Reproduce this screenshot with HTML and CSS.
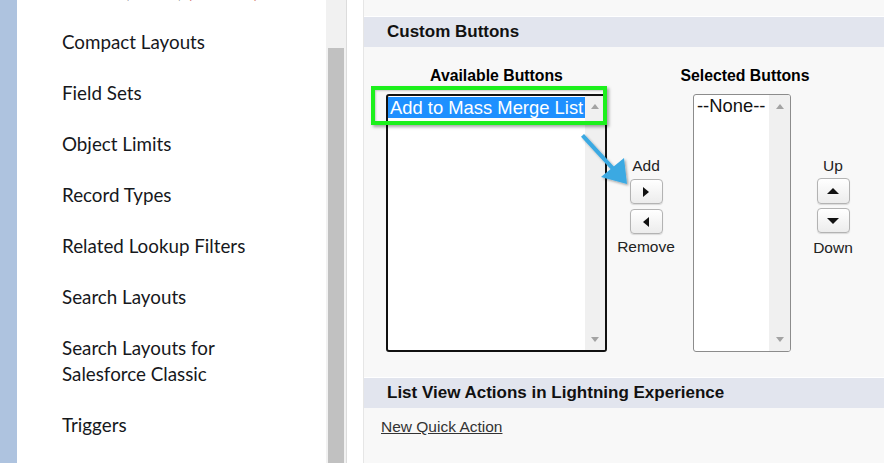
FILE: index.html
```html
<!DOCTYPE html>
<html>
<head>
<meta charset="utf-8">
<link rel="stylesheet" href="styles.css">
</head>
<body>
<div class="page">
  <div class="strip"></div>
  <nav class="sidebar">
    <ul class="menu">
      <li class="menu-item">Buttons, Links, <span class="red">(Actions)</span></li>
      <li class="menu-item">Compact Layouts</li>
      <li class="menu-item">Field Sets</li>
      <li class="menu-item">Object Limits</li>
      <li class="menu-item">Record Types</li>
      <li class="menu-item">Related Lookup Filters</li>
      <li class="menu-item">Search Layouts</li>
      <li class="menu-item">Search Layouts for<br>Salesforce Classic</li>
      <li class="menu-item">Triggers</li>
    </ul>
  </nav>
  <div class="scrollbar"><div class="thumb"></div></div>
  <div class="gutter"></div>
  <main class="main">
    <h2 class="section-head">Custom Buttons</h2>
    <div class="picker">
      <div class="pick-col col-available">
        <div class="pick-label">Available Buttons</div>
        <div class="listbox listbox-dark">
          <div class="options"><div class="option selected">Add to Mass Merge List</div></div>
          <div class="sb"><span class="tri-up"></span><span class="tri-down"></span></div>
        </div>
      </div>
      <div class="btn-col col-addrem">
        <div class="btn-label">Add</div>
        <button class="arrow-btn"><span class="ic-right"></span></button>
        <button class="arrow-btn"><span class="ic-left"></span></button>
        <div class="btn-label">Remove</div>
      </div>
      <div class="pick-col col-selected">
        <div class="pick-label label-selected">Selected Buttons</div>
        <div class="listbox listbox-light">
          <div class="options"><div class="option">--None--</div></div>
          <div class="sb"><span class="tri-up"></span><span class="tri-down"></span></div>
        </div>
      </div>
      <div class="btn-col col-updown">
        <div class="btn-label">Up</div>
        <button class="arrow-btn"><span class="ic-up"></span></button>
        <button class="arrow-btn"><span class="ic-down"></span></button>
        <div class="btn-label">Down</div>
      </div>
    </div>
    <h2 class="section-head section-head2">List View Actions in Lightning Experience</h2>
    <a class="quick-link" href="#">New Quick Action</a>
  </main>

  <div class="highlight"></div>
  <svg class="callout-arrow" width="60" height="64" viewBox="0 0 60 64">
    <defs>
      <filter id="sh" x="-30%" y="-30%" width="160%" height="160%">
        <feDropShadow dx="1.5" dy="1.5" stdDeviation="1.2" flood-color="#000" flood-opacity="0.35"/>
      </filter>
    </defs>
    <g filter="url(#sh)" fill="#3aa9e2">
      <path d="M6 3 L36.5 36.2 L33.5 39 L3 5.8 Z"/>
      <path d="M49 53 L23 46 L46 27 Z"/>
    </g>
  </svg>
</div>
</body>
</html>
```
FILE: styles.css
```css
* { box-sizing: border-box; }
html, body { margin: 0; padding: 0; }
body { width: 884px; height: 463px; overflow: hidden; background: #f8f8f8; }

.page {
  position: relative;
  display: flex;
  width: 884px;
  height: 463px;
  overflow: hidden;
}

.strip { width: 17px; flex: none; background: #aec3df; }

.sidebar {
  width: 309px;
  flex: none;
  background: #ffffff;
  overflow: hidden;
}
.menu {
  list-style: none;
  margin: -22px 0 0 0;
  padding: 0 0 0 45px;
  display: flex;
  flex-direction: column;
  gap: 25px;
}
.menu-item {
  font-family: Lato, "Noto Sans", sans-serif;
  font-size: 18.8px;
  line-height: 26px;
  color: #16181c;
  white-space: nowrap;
}
.red { color: #c23934; }

.scrollbar {
  width: 21px;
  flex: none;
  background: #f1f1f1;
  padding: 48px 2px 0 2px;
  border-right: 1px solid #dcdcdc;
}
.thumb { height: 100%; background: #c1c1c1; }

.gutter {
  width: 17px;
  flex: none;
  background: #ffffff;
  border-right: 1px solid #e6e6e6;
}

.main {
  flex: 1;
  background: #f8f8f8;
  padding-top: 16px;
  font-family: "Liberation Sans", Arial, sans-serif;
  color: #000;
}

.section-head {
  margin: 0;
  height: 31px;
  padding-left: 23px;
  background: #e2e5ee;
  border-top: 1px solid #ffffff;
  font-size: 17px;
  font-weight: bold;
  line-height: 30px;
  color: #111;
}
.section-head2 { margin-top: 25px; }

.picker {
  display: flex;
  align-items: flex-start;
  padding-left: 22px;
}

.pick-col { display: flex; flex-direction: column; align-items: center; }
.col-available { width: 221px; }
.col-selected { width: 98px; margin-left: 1px; }
.pick-label {
  margin-top: 21px;
  font-size: 15.8px;
  font-weight: bold;
  line-height: 16px;
  height: 16px;
  white-space: nowrap;
}
.label-selected { margin-left: 6px; }

.listbox {
  margin-top: 10px;
  height: 258px;
  display: flex;
  background: #fff;
  border-radius: 3px;
  overflow: hidden;
}
.listbox-dark { width: 221px; border: 2px solid #111; }
.listbox-light { width: 98px; border: 1px solid #8c8c8c; }

.options { flex: 1; padding-top: 1px; }
.option {
  font-size: 18.4px;
  line-height: 21px;
  height: 21px;
  padding-left: 2px;
  white-space: nowrap;
  color: #111;
}
.listbox-light .options { padding-top: 0; }
.listbox-light .option { padding-left: 3px; }
.option.selected { background: #1e90ff; color: #fff; }

.sb {
  width: 20px;
  flex: none;
  background: #f0f0f0;
  display: flex;
  flex-direction: column;
  justify-content: space-between;
  align-items: center;
  padding: 8px 0 8px;
}
.listbox-light .sb { width: 21px; padding-top: 9px; padding-bottom: 9px; }
.tri-up, .tri-down { width: 0; height: 0; border-left: 4.5px solid transparent; border-right: 4.5px solid transparent; }
.tri-up { border-bottom: 5px solid #a3a3a3; }
.tri-down { border-top: 5px solid #a3a3a3; }

.btn-col {
  width: 76px;
  display: flex;
  flex-direction: column;
  align-items: center;
}
.col-addrem { padding-top: 111px; margin-left: 1px; margin-right: 8px; }
.col-updown { padding-top: 111px; margin-left: 4px; }

.btn-label {
  font-size: 15.5px;
  line-height: 16px;
  color: #222;
}
.arrow-btn {
  width: 33px;
  height: 25px;
  margin: 5px 0 0 0;
  padding: 0;
  border: 1px solid #b3b3b3;
  border-radius: 4px;
  background: linear-gradient(#ffffff, #ececec);
  box-shadow: 0 1px 1px rgba(0,0,0,0.12);
  display: flex;
  align-items: center;
  justify-content: center;
}
.col-updown .arrow-btn:first-of-type { margin-top: 4px; height: 26px; }
.col-updown .arrow-btn + .arrow-btn { margin-top: 4px; }
.arrow-btn + .btn-label { margin-top: 5px; }
.col-updown .arrow-btn + .btn-label { margin-top: 7px; }
.ic-right, .ic-left, .ic-up, .ic-down { width: 0; height: 0; }
.ic-right { border-top: 5.5px solid transparent; border-bottom: 5.5px solid transparent; border-left: 6px solid #111; }
.ic-left { border-top: 5.5px solid transparent; border-bottom: 5.5px solid transparent; border-right: 6px solid #111; }
.ic-up { border-left: 6px solid transparent; border-right: 6px solid transparent; border-bottom: 6px solid #111; }
.ic-down { border-left: 6px solid transparent; border-right: 6px solid transparent; border-top: 6px solid #111; }

.quick-link {
  display: inline-block;
  margin: 10px 0 0 17px;
  font-size: 15.5px;
  line-height: 18px;
  color: #333;
  text-decoration: underline;
}

/* annotation overlays */
.highlight {
  position: absolute;
  left: 371px;
  top: 86px;
  width: 236px;
  height: 39px;
  border: 4px solid #1cf01c;
  box-shadow: 2px 2px 3px rgba(0,0,0,0.35), inset 1px 1px 2px rgba(0,0,0,0.2);
}
.callout-arrow {
  position: absolute;
  left: 578px;
  top: 131px;
}
```
